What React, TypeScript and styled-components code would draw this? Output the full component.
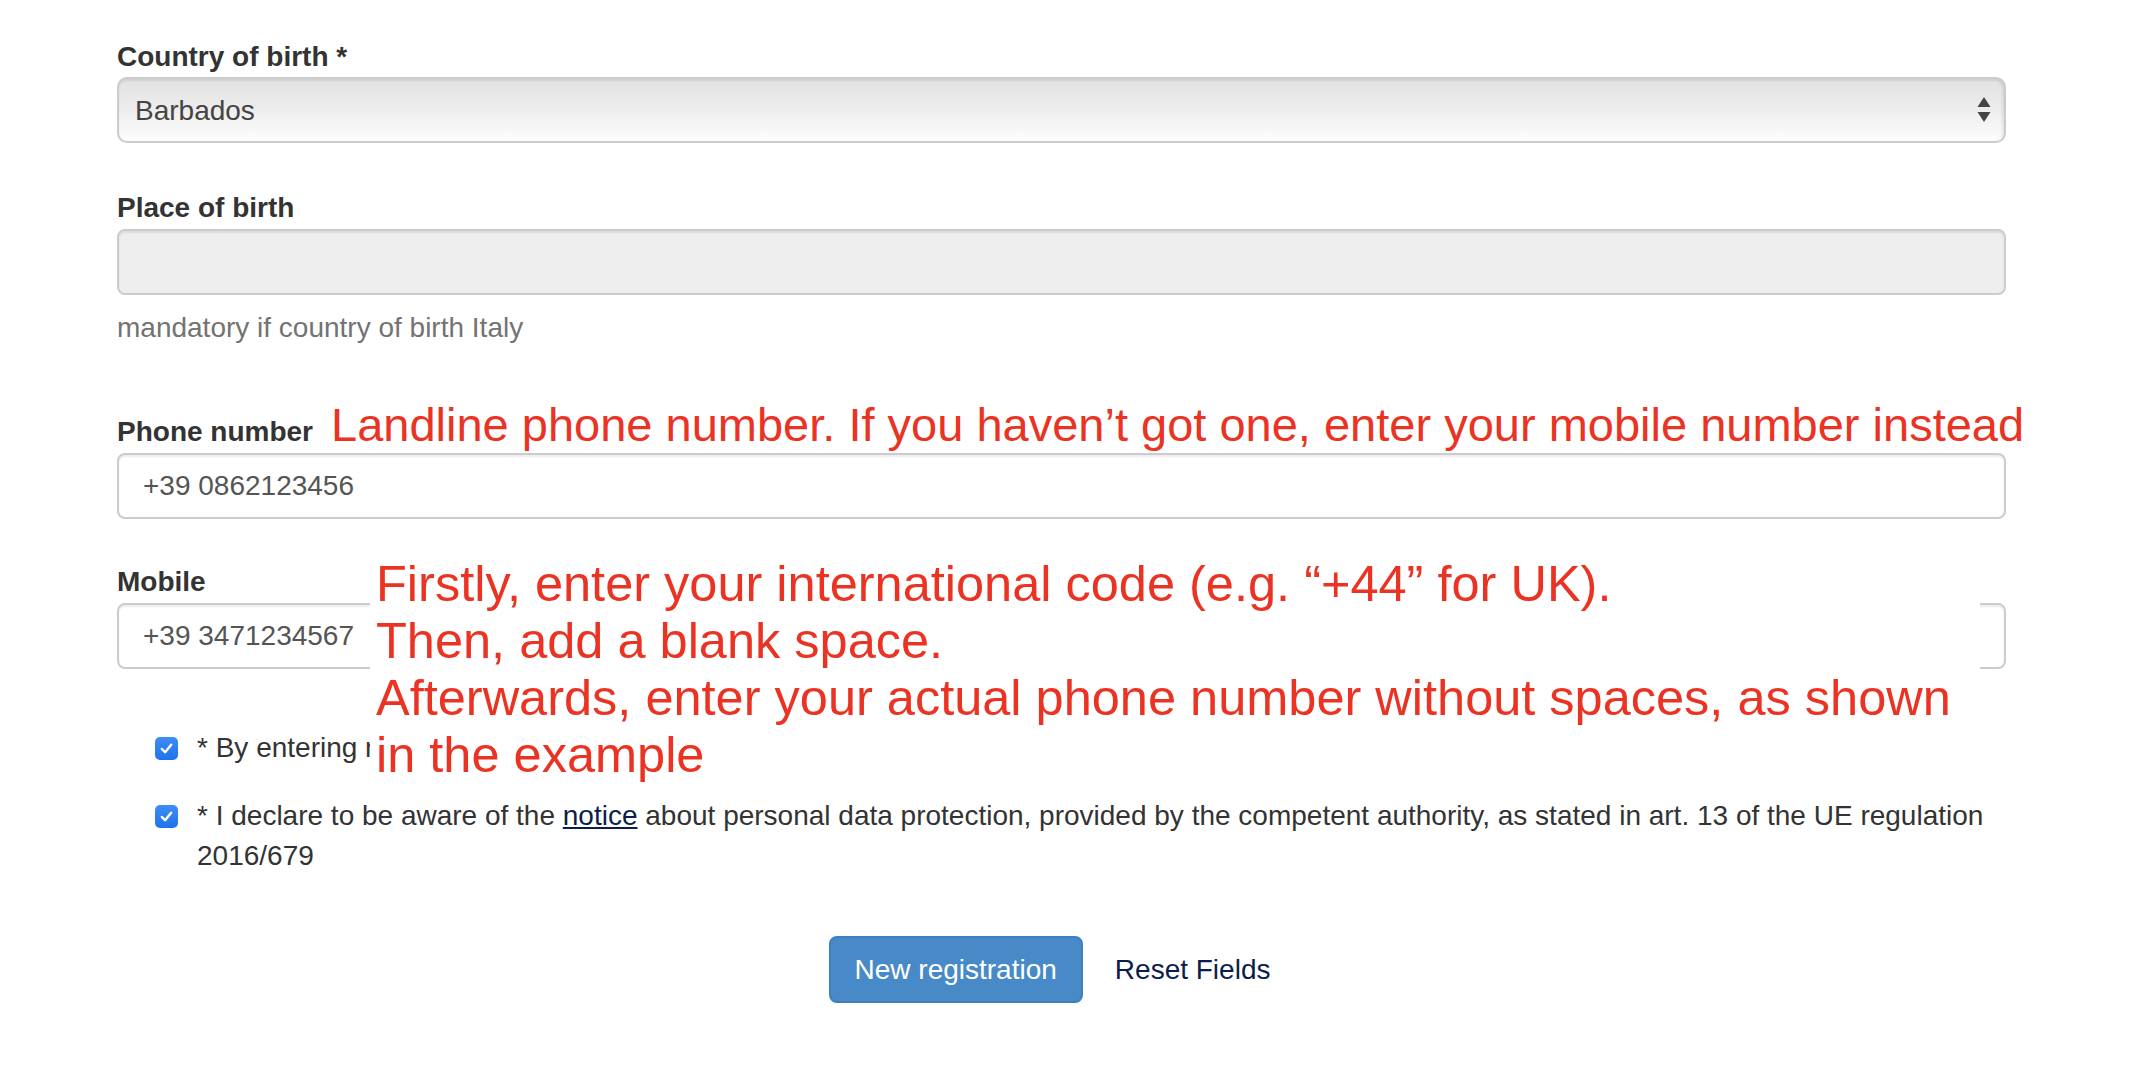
import React from "react";
import styled, { createGlobalStyle } from "styled-components";

const GlobalStyle = createGlobalStyle`
  body {
    margin: 0;
    background: #fff;
    font-family: "Liberation Sans", Arial, Helvetica, sans-serif;
    color: #333;
  }
`;

const Page = styled.div`
  padding: 37px 0 60px 117px;
`;

const Form = styled.form`
  position: relative;
  width: 1889px;
`;

const FormGroup = styled.div<{ $mb?: number }>`
  margin-bottom: ${(p) => p.$mb ?? 0}px;
`;

const Label = styled.label`
  display: block;
  font-size: 28px;
  font-weight: bold;
  line-height: 40px;
  height: 40px;
  margin-bottom: 0;
  color: #333;
  white-space: nowrap;
`;

const LabelRow = styled.div`
  display: flex;
  align-items: baseline;
  height: 40px;
  margin-bottom: 1px;
  white-space: nowrap;
`;

const Note = styled.span`
  margin-left: 18px;
  font-size: 47px;
  line-height: 26px;
  color: #ea3323;
`;

const Input = styled.input`
  display: block;
  box-sizing: border-box;
  width: 100%;
  height: 66px;
  padding: 0 24px;
  font-family: inherit;
  font-size: 28px;
  color: #555;
  background: #fff;
  border: 2px solid #ccc;
  border-radius: 8px;
  box-shadow: inset 0 2px 2px rgba(0, 0, 0, 0.075);
  outline: none;
  &:disabled {
    background: #eee;
  }
`;

const SelectWrap = styled.div`
  position: relative;
  height: 66px;
`;

const Select = styled.select`
  appearance: none;
  -webkit-appearance: none;
  box-sizing: border-box;
  width: 100%;
  height: 66px;
  padding: 0 60px 0 16px;
  font-family: inherit;
  font-size: 28px;
  color: #444;
  border: 2px solid #ccc;
  border-radius: 10px;
  background: linear-gradient(#e2e2e2, #ececec 45%, #f8f8f8 85%, #fff);
  box-shadow: inset 0 2px 2px rgba(0, 0, 0, 0.08), inset -4px 0 4px -3px rgba(0, 0, 0, 0.1);
  outline: none;
`;

const Arrows = styled.svg`
  position: absolute;
  right: 15px;
  top: 20px;
  pointer-events: none;
`;

const HelpText = styled.p`
  margin: 13px 0 0;
  font-size: 28px;
  line-height: 40px;
  color: #737373;
`;

const Overlay = styled.div`
  position: absolute;
  left: 253px;
  top: 518px;
  width: 1610px;
  padding: 0 0 0 6px;
  box-sizing: border-box;
  background: #fff;
`;

const OverlayLine = styled.div`
  font-size: 50.5px;
  line-height: 57px;
  color: #ea3323;
  white-space: nowrap;
`;

const CheckRow = styled.label<{ $mt: number }>`
  display: flex;
  align-items: flex-start;
  gap: 19px;
  margin: ${(p) => p.$mt}px 0 0 38px;
  font-size: 28px;
  line-height: 40px;
  color: #333;
`;

const Box = styled.span`
  flex: none;
  width: 23px;
  height: 23px;
  margin-top: 9px;
  border-radius: 5px;
  background: linear-gradient(#3e8ef7, #1f72ea);
  display: flex;
  align-items: center;
  justify-content: center;
`;

const NoticeLink = styled.a`
  color: #0c1d4d;
  text-decoration: underline;
`;

const Actions = styled.div`
  display: flex;
  justify-content: center;
  align-items: center;
  gap: 8px;
  margin-top: 60px;
`;

const PrimaryButton = styled.button`
  box-sizing: border-box;
  height: 67px;
  padding: 0 24px;
  font-family: inherit;
  font-size: 28px;
  color: #fff;
  background: #4889c8;
  border: 2px solid #3f7fbe;
  border-radius: 8px;
`;

const LinkButton = styled.button`
  padding: 0 24px;
  font-family: inherit;
  font-size: 28px;
  color: #0c1d4d;
  background: none;
  border: none;
`;

const Check = () => (
  <Box>
    <svg width="15" height="15" viewBox="0 0 16 16">
      <path d="M3 8.5 6.5 12 13 4" fill="none" stroke="#fff" strokeWidth="2.6" strokeLinecap="round" strokeLinejoin="round" />
    </svg>
  </Box>
);

const App = () => {
  return (
    <Page>
      <GlobalStyle />
      <Form onSubmit={(e) => e.preventDefault()}>
        <FormGroup $mb={45}>
          <Label>Country of birth *</Label>
          <SelectWrap>
            <Select defaultValue="Barbados">
              <option>Barbados</option>
            </Select>
            <Arrows width="14" height="26" viewBox="0 0 14 26">
              <path d="M7 0 13.5 10H0.5Z" fill="#444" />
              <path d="M0.5 15H13.5L7 25Z" fill="#444" />
            </Arrows>
          </SelectWrap>
        </FormGroup>

        <FormGroup $mb={64}>
          <Label>Place of birth</Label>
          <Input disabled style={{ marginTop: 1 }} />
          <HelpText>mandatory if country of birth Italy</HelpText>
        </FormGroup>

        <FormGroup $mb={43}>
          <LabelRow>
            <Label>Phone number</Label>
            <Note>Landline phone number. If you haven’t got one, enter your mobile number instead</Note>
          </LabelRow>
          <Input defaultValue="+39 0862123456" />
        </FormGroup>

        <FormGroup>
          <LabelRow>
            <Label>Mobile</Label>
          </LabelRow>
          <Input defaultValue="+39 3471234567" />
        </FormGroup>

        <CheckRow $mt={59}>
          <Check />
          <span>* By entering my personal data I declare that the information provided is true and correct</span>
        </CheckRow>
        <CheckRow $mt={28}>
          <Check />
          <span>
            * I declare to be aware of the <NoticeLink href="#">notice</NoticeLink> about personal data
            protection, provided by the competent authority, as stated in art. 13 of the UE regulation
            2016/679
          </span>
        </CheckRow>

        <Actions>
          <PrimaryButton type="button">New registration</PrimaryButton>
          <LinkButton type="button">Reset Fields</LinkButton>
        </Actions>

        <Overlay>
          <OverlayLine>Firstly, enter your international code (e.g. “+44” for UK).</OverlayLine>
          <OverlayLine>Then, add a blank space.</OverlayLine>
          <OverlayLine>Afterwards, enter your actual phone number without spaces, as shown</OverlayLine>
          <OverlayLine>in the example</OverlayLine>
        </Overlay>
      </Form>
    </Page>
  );
};

export default App;
